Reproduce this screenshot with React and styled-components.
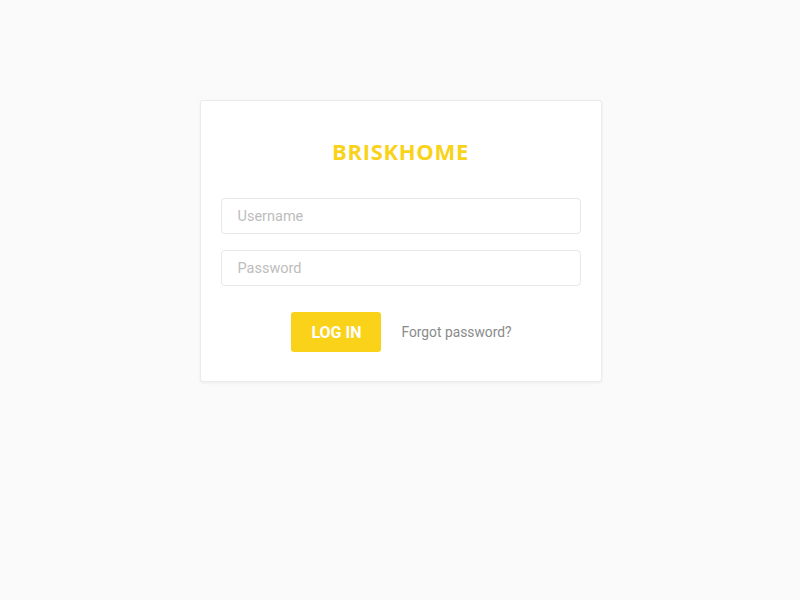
import React from 'react';
import styled, { createGlobalStyle } from 'styled-components';

const Global = createGlobalStyle`
  html, body {
    margin: 0;
    padding: 0;
    background: #fafafa;
    font-family: Roboto, "Liberation Sans", sans-serif;
  }
`;

const Page = styled.div`
  width: 800px;
  height: 600px;
  display: flex;
  justify-content: center;
  padding-top: 100px;
  box-sizing: border-box;
`;

const Card = styled.form`
  width: 402px;
  height: 282px;
  box-sizing: border-box;
  margin-left: 1px;
  background: #fff;
  border: 1px solid #ebebeb;
  border-radius: 3px;
  box-shadow: 0 1px 3px rgba(0, 0, 0, 0.06);
  padding: 35px 20px 0;
  display: flex;
  flex-direction: column;
`;

const Title = styled.h1`
  margin: 0 0 32px;
  text-align: center;
  font-family: "Open Sans", "Noto Sans", sans-serif;
  font-weight: 700;
  font-size: 22px;
  line-height: 30px;
  letter-spacing: 0.7px;
  color: #f9d21a;
`;

const Input = styled.input`
  height: 36px;
  box-sizing: border-box;
  border: 1px solid #e8e8e8;
  border-radius: 4px;
  padding: 0 16px;
  margin-bottom: ${p => p.$last ? '26px' : '16px'};
  font-family: Roboto, "Liberation Sans", sans-serif;
  font-size: 14.5px;
  color: #333;
  outline: none;
  &::placeholder {
    color: #bdbdbd;
  }
`;

const Actions = styled.div`
  display: flex;
  justify-content: center;
  align-items: center;
  gap: 20px;
  padding-left: 2px;
`;

const Button = styled.button`
  width: 90px;
  height: 40px;
  border: none;
  border-radius: 3px;
  background: #fad21a;
  color: #fff;
  font-family: Roboto, "Liberation Sans", sans-serif;
  font-weight: 700;
  font-size: 16px;
  cursor: pointer;
`;

const Link = styled.a`
  font-size: 13.8px;
  color: #8a8a8a;
  text-decoration: none;
`;

export default function App() {
  return (
    <>
      <Global />
      <Page>
        <Card onSubmit={e => e.preventDefault()}>
          <Title>BRISKHOME</Title>
          <Input placeholder="Username" />
          <Input type="password" placeholder="Password" $last />
          <Actions>
            <Button type="submit">LOG IN</Button>
            <Link href="#">Forgot password?</Link>
          </Actions>
        </Card>
      </Page>
    </>
  );
}
